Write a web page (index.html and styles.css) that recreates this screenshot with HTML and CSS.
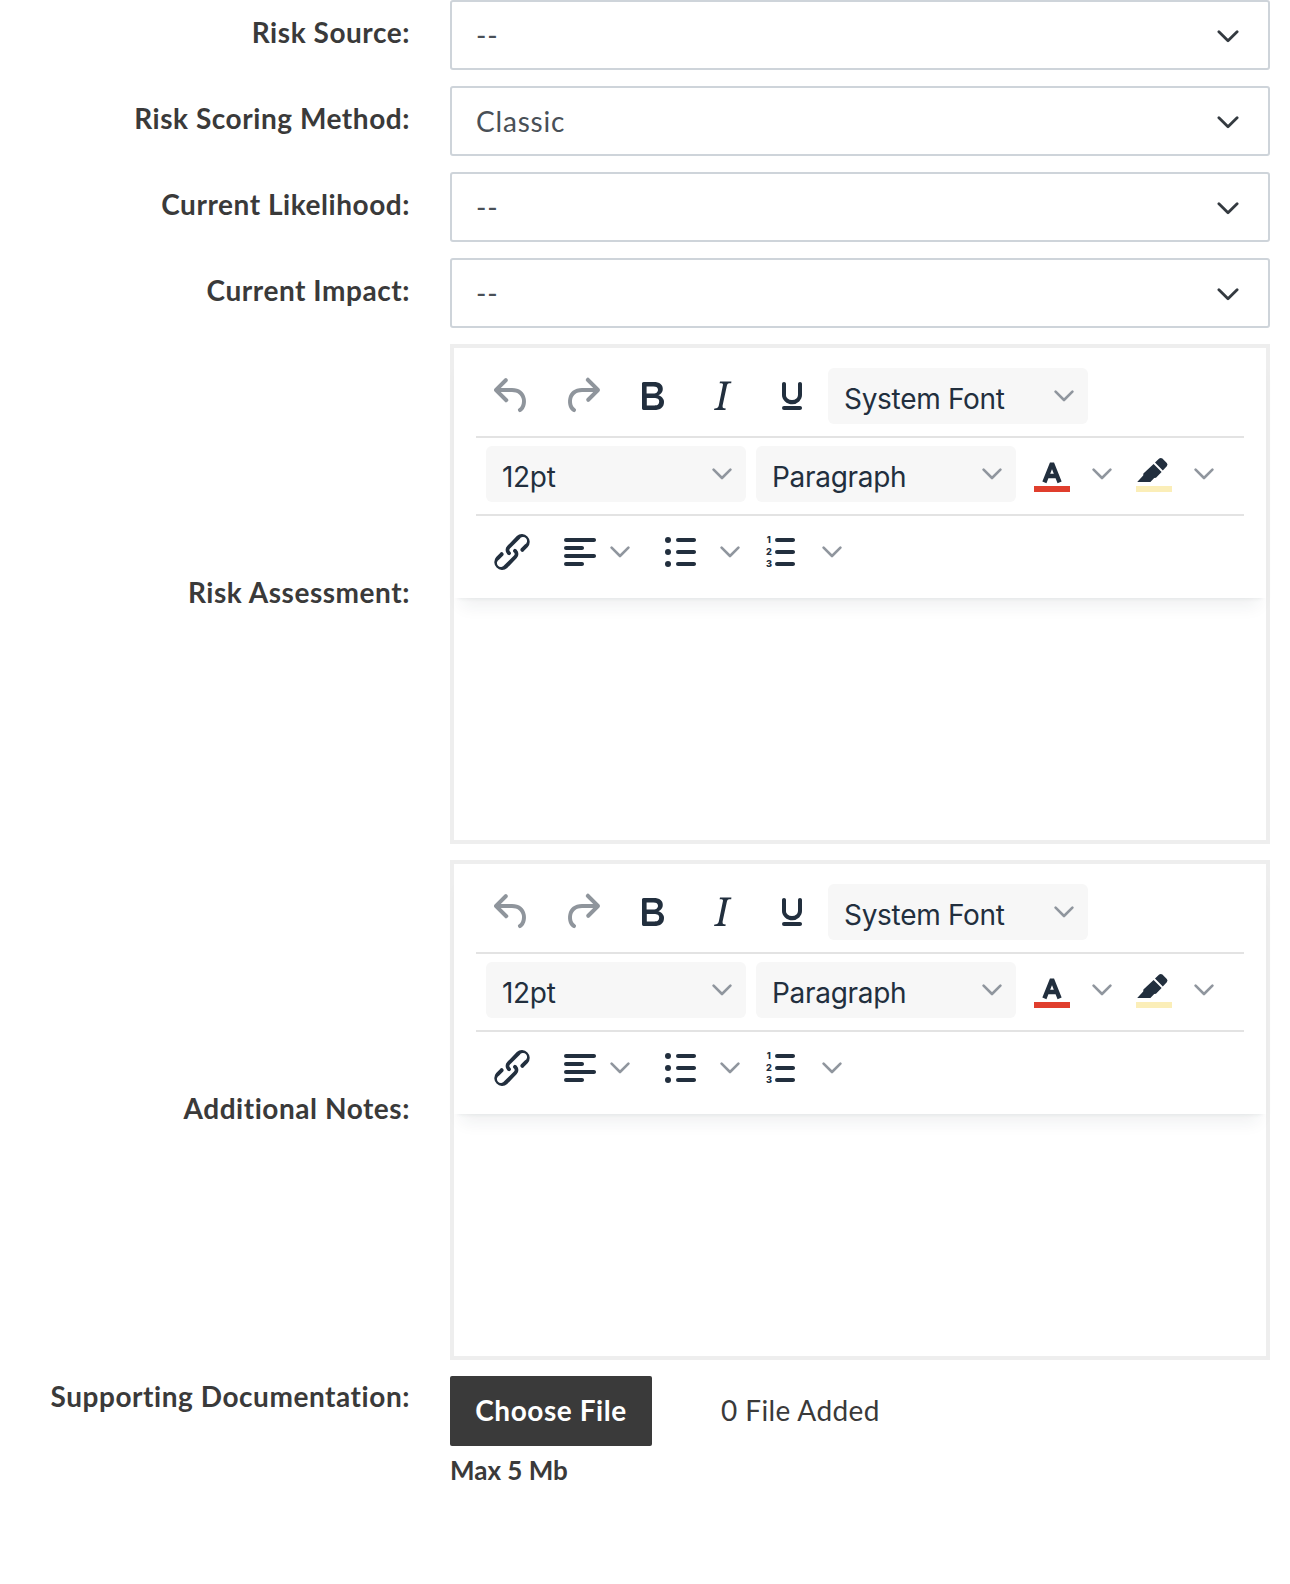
FILE: index.html
```html
<!DOCTYPE html>
<html lang="en">
<head>
<meta charset="utf-8">
<title>Risk form</title>
<link rel="stylesheet" href="styles.css">
</head>
<body>
<svg class="sprite" xmlns="http://www.w3.org/2000/svg">
  <symbol id="undo" viewBox="0 0 24 24"><path d="M6.4 8H12c3.7 0 6.2 2 6.8 5.1.6 2.7-.4 5.6-2.3 6.8a1 1 0 0 1-1-1.8c1.1-.6 1.8-2.7 1.4-4.6-.5-2.1-2.1-3.5-4.9-3.5H6.4l3.3 3.3a1 1 0 1 1-1.4 1.4l-5-5a1 1 0 0 1 0-1.4l5-5a1 1 0 0 1 1.4 1.4L6.4 8Z"/></symbol>
  <symbol id="redo" viewBox="0 0 24 24"><path d="M17.6 10H12c-2.8 0-4.4 1.4-4.9 3.5-.4 2 .3 4 1.4 4.6a1 1 0 1 1-1 1.8c-2-1.2-2.9-4.1-2.3-6.8.6-3 3-5.1 6.8-5.1h5.6l-3.3-3.3a1 1 0 1 1 1.4-1.4l5 5a1 1 0 0 1 0 1.4l-5 5a1 1 0 0 1-1.4-1.4l3.3-3.3Z"/></symbol>
  <symbol id="bold" viewBox="0 0 24 24"><path d="M7.8 19c-.3 0-.5 0-.6-.2l-.2-.5V5.7c0-.2 0-.4.2-.5l.6-.2h5c1.5 0 2.7.3 3.5 1 .7.6 1.1 1.4 1.1 2.5a3 3 0 0 1-.6 1.9c-.4.6-1 1-1.6 1.2.4.1.9.3 1.3.6s.8.7 1 1.2c.4.4.5 1 .5 1.6 0 1.3-.4 2.3-1.3 3-.8.7-2.1 1-3.8 1H7.8Zm5-8.3c.6 0 1.2-.1 1.6-.5.4-.3.6-.7.6-1.3 0-1.1-.8-1.7-2.3-1.7H9.3v3.5h3.4Zm.5 6c.7 0 1.3-.1 1.7-.4.4-.4.6-.9.6-1.5s-.2-1-.7-1.4c-.4-.3-1-.4-2-.4H9.4v3.8h4Z"/></symbol>
  <symbol id="italic" viewBox="0 0 24 24"><path d="M16.7 4.7l-.1.9h-.3c-.6 0-1 0-1.4.3-.3.3-.4.6-.5 1.1l-2.1 9.8v.6c0 .5.4.8 1.4.8h.2l-.2.8H8l.2-.8h.2c1.1 0 1.8-.5 2-1.5l2-9.8.1-.5c0-.6-.4-.8-1.4-.8h-.3l.2-.9h5.8Z"/></symbol>
  <symbol id="underline" viewBox="0 0 24 24"><path d="M16 5c.6 0 1 .4 1 1v5.5a4 4 0 0 1-.4 1.8l-1 1.4a5.3 5.3 0 0 1-5.5 1 5 5 0 0 1-1.6-1c-.5-.4-.8-.9-1.1-1.4a4 4 0 0 1-.4-1.8V6c0-.6.4-1 1-1s1 .4 1 1v5.5c0 .3 0 .6.2 1l.6.7a3.3 3.3 0 0 0 2.2.8 3.4 3.4 0 0 0 2.2-.8c.3-.2.4-.5.6-.8l.2-.9V6c0-.6.4-1 1-1ZM8 17h8c.6 0 1 .4 1 1s-.4 1-1 1H8a1 1 0 0 1 0-2Z"/></symbol>
  <symbol id="link" viewBox="0 0 24 24"><path d="M6.2 12.3a1 1 0 0 1 1.4 1.4l-2 2a2 2 0 1 0 2.6 2.8l4.8-4.8a1 1 0 0 0 0-1.4 1 1 0 1 1 1.4-1.3 2.9 2.9 0 0 1 0 4L9.6 20a3.9 3.9 0 0 1-5.5-5.5l2-2Zm11.6-.6a1 1 0 0 1-1.4-1.4l2-2a2 2 0 1 0-2.6-2.8L11 10.3a1 1 0 0 0 0 1.4A1 1 0 1 1 9.6 13a2.9 2.9 0 0 1 0-4L14.4 4a3.9 3.9 0 0 1 5.5 5.5l-2 2Z"/></symbol>
  <symbol id="alignleft" viewBox="0 0 24 24"><path d="M5 5h14c.6 0 1 .4 1 1s-.4 1-1 1H5a1 1 0 1 1 0-2Zm0 4h8c.6 0 1 .4 1 1s-.4 1-1 1H5a1 1 0 1 1 0-2Zm0 8h8c.6 0 1 .4 1 1s-.4 1-1 1H5a1 1 0 0 1 0-2Zm0-4h14c.6 0 1 .4 1 1s-.4 1-1 1H5a1 1 0 0 1 0-2Z"/></symbol>
  <symbol id="bullist" viewBox="0 0 24 24"><path d="M11 5h8c.6 0 1 .4 1 1s-.4 1-1 1h-8a1 1 0 0 1 0-2Zm0 6h8c.6 0 1 .4 1 1s-.4 1-1 1h-8a1 1 0 0 1 0-2Zm0 6h8c.6 0 1 .4 1 1s-.4 1-1 1h-8a1 1 0 0 1 0-2Z"/><circle cx="6" cy="6" r="1.5"/><circle cx="6" cy="12" r="1.5"/><circle cx="6" cy="18" r="1.5"/></symbol>
  <symbol id="numlist" viewBox="0 0 24 24"><path d="M11 5h8c.6 0 1 .4 1 1s-.4 1-1 1h-8a1 1 0 0 1 0-2Zm0 6h8c.6 0 1 .4 1 1s-.4 1-1 1h-8a1 1 0 0 1 0-2Zm0 6h8c.6 0 1 .4 1 1s-.4 1-1 1h-8a1 1 0 0 1 0-2Z"/><text class="num" x="6.8" y="7.4">1</text><text class="num" x="6.8" y="13.4">2</text><text class="num" x="6.8" y="19.4">3</text></symbol>
  <symbol id="forecolor" viewBox="0 0 24 24"><path class="glyph-stroke" d="M8.2 16.2 12 6.6 15.8 16.2M9.6 13h4.8"/><rect class="bar-red" x="3" y="18" width="18" height="3"/></symbol>
  <symbol id="hilite" viewBox="0 0 24 24"><path d="M14.6 4.3a1.2 1.2 0 0 1 1.6 0l2.2 2.2a1.2 1.2 0 0 1 0 1.6l-2 2.1-3.9-3.9 2.1-2ZM11.8 7l4 4-2.8 2.9-.9.1-1.9 2H3.6l3-3.2.1-1.1 5.1-4.7Z"/><rect class="bar-yellow" x="3" y="18" width="18" height="3"/></symbol>
  <symbol id="chev" viewBox="0 0 20 12"><path d="M1.6 1.6 10 10 18.4 1.6" fill="none" stroke="currentColor" stroke-width="2.6" stroke-linecap="round" stroke-linejoin="round"/></symbol>
</svg>

<main class="form">
  <div class="row">
    <label class="label">Risk Source:</label>
    <div class="select"><span class="select-text">--</span><svg class="select-chev"><use href="#chev"/></svg></div>
  </div>
  <div class="row">
    <label class="label">Risk Scoring Method:</label>
    <div class="select"><span class="select-text">Classic</span><svg class="select-chev"><use href="#chev"/></svg></div>
  </div>
  <div class="row">
    <label class="label">Current Likelihood:</label>
    <div class="select"><span class="select-text">--</span><svg class="select-chev"><use href="#chev"/></svg></div>
  </div>
  <div class="row">
    <label class="label">Current Impact:</label>
    <div class="select"><span class="select-text">--</span><svg class="select-chev"><use href="#chev"/></svg></div>
  </div>

  <div class="row row-editor">
    <label class="label">Risk Assessment:</label>
    <div class="editor">
      <div class="toolbar">
        <div class="tb-row tb-first">
          <span class="tb-btn muted"><svg class="icon"><use href="#undo"/></svg></span>
          <span class="tb-btn muted"><svg class="icon"><use href="#redo"/></svg></span>
          <span class="tb-btn"><svg class="icon"><use href="#bold"/></svg></span>
          <span class="tb-btn"><svg class="icon"><use href="#italic"/></svg></span>
          <span class="tb-btn"><svg class="icon"><use href="#underline"/></svg></span>
          <span class="tb-select"><span class="tb-text">System Font</span><svg class="chev"><use href="#chev"/></svg></span>
        </div>
        <div class="tb-row tb-second">
          <span class="tb-select"><span class="tb-text">12pt</span><svg class="chev"><use href="#chev"/></svg></span>
          <span class="tb-select"><span class="tb-text">Paragraph</span><svg class="chev"><use href="#chev"/></svg></span>
          <span class="tb-icon"><svg class="icon"><use href="#forecolor"/></svg></span>
          <svg class="chev split"><use href="#chev"/></svg>
          <span class="tb-icon"><svg class="icon"><use href="#hilite"/></svg></span>
          <svg class="chev split"><use href="#chev"/></svg>
        </div>
        <div class="tb-row tb-third">
          <span class="tb-icon"><svg class="icon"><use href="#link"/></svg></span>
          <span class="tb-icon"><svg class="icon"><use href="#alignleft"/></svg></span>
          <svg class="chev split-align"><use href="#chev"/></svg>
          <span class="tb-icon"><svg class="icon"><use href="#bullist"/></svg></span>
          <svg class="chev split-list"><use href="#chev"/></svg>
          <span class="tb-icon"><svg class="icon"><use href="#numlist"/></svg></span>
          <svg class="chev split-num"><use href="#chev"/></svg>
        </div>
      </div>
    </div>
  </div>

  <div class="row row-editor">
    <label class="label">Additional Notes:</label>
    <div class="editor">
      <div class="toolbar">
        <div class="tb-row tb-first">
          <span class="tb-btn muted"><svg class="icon"><use href="#undo"/></svg></span>
          <span class="tb-btn muted"><svg class="icon"><use href="#redo"/></svg></span>
          <span class="tb-btn"><svg class="icon"><use href="#bold"/></svg></span>
          <span class="tb-btn"><svg class="icon"><use href="#italic"/></svg></span>
          <span class="tb-btn"><svg class="icon"><use href="#underline"/></svg></span>
          <span class="tb-select"><span class="tb-text">System Font</span><svg class="chev"><use href="#chev"/></svg></span>
        </div>
        <div class="tb-row tb-second">
          <span class="tb-select"><span class="tb-text">12pt</span><svg class="chev"><use href="#chev"/></svg></span>
          <span class="tb-select"><span class="tb-text">Paragraph</span><svg class="chev"><use href="#chev"/></svg></span>
          <span class="tb-icon"><svg class="icon"><use href="#forecolor"/></svg></span>
          <svg class="chev split"><use href="#chev"/></svg>
          <span class="tb-icon"><svg class="icon"><use href="#hilite"/></svg></span>
          <svg class="chev split"><use href="#chev"/></svg>
        </div>
        <div class="tb-row tb-third">
          <span class="tb-icon"><svg class="icon"><use href="#link"/></svg></span>
          <span class="tb-icon"><svg class="icon"><use href="#alignleft"/></svg></span>
          <svg class="chev split-align"><use href="#chev"/></svg>
          <span class="tb-icon"><svg class="icon"><use href="#bullist"/></svg></span>
          <svg class="chev split-list"><use href="#chev"/></svg>
          <span class="tb-icon"><svg class="icon"><use href="#numlist"/></svg></span>
          <svg class="chev split-num"><use href="#chev"/></svg>
        </div>
      </div>
    </div>
  </div>

  <div class="row row-file">
    <label class="label">Supporting Documentation:</label>
    <div class="file-col">
      <div class="file-line">
        <span class="file-btn">Choose File</span>
        <span class="file-count">0 File Added</span>
      </div>
      <div class="file-note">Max 5 Mb</div>
    </div>
  </div>
</main>
</body>
</html>
```
FILE: styles.css
```css
* { box-sizing: border-box; }
html, body { margin: 0; padding: 0; background: #fff; }
body { font-family: "Lato", "Open Sans", sans-serif; font-size: 28px; line-height: 40px; letter-spacing: .55px; color: #3a3a3a; }
.sprite { display: none; }

.form { display: flex; flex-direction: column; gap: 16px; padding-right: 20px; min-height: 1584px; }
.row { display: grid; grid-template-columns: 410px 820px; column-gap: 40px; align-items: start; }
.label { font-weight: 700; text-align: right; padding-top: 12px; white-space: nowrap; }
.row-editor { align-items: center; }
.row-editor .label { padding-top: 0; margin-bottom: 4px; }
.row-file .label { padding-top: 0; }

.select { height: 70px; border: 2px solid #ced4da; border-radius: 3px; display: flex; align-items: center; justify-content: space-between; padding: 0 29px 0 24px; color: #495057; }
.select-text { padding-bottom: 1px; letter-spacing: .8px; }
.select-chev { width: 22px; height: 13px; margin-top: 2px; color: #343a40; }

.editor { height: 500px; border: 4px solid #eee; background: #fff; }
.toolbar { box-shadow: 0 4px 4px -4px rgba(34,47,62,.1), 0 16px 16px -8px rgba(34,47,62,.07); padding: 0 22px; }
.tb-row { display: flex; align-items: center; border-bottom: 2px solid #e3e3e3; font-family: "Inter", sans-serif; letter-spacing: -.3px; color: #222f3e; }
.tb-first { padding: 20px 0 12px 2px; }
.tb-second { padding: 8px 0 12px 10px; }
.tb-third { padding: 8px 0 18px 2px; border-bottom: 0; }

.tb-btn { width: 68px; height: 56px; margin-right: 2px; display: flex; align-items: center; justify-content: center; fill: #222f3e; }
.tb-btn.muted { fill: #8f959c; }
.tb-icon { width: 68px; height: 56px; padding-left: 10px; display: flex; align-items: center; fill: #222f3e; flex: none; }
.icon { width: 48px; height: 48px; flex: none; }
.num { font: 800 4.6px "Inter", sans-serif; text-anchor: middle; fill: #222f3e; }
.glyph-stroke { fill: none; stroke: #222f3e; stroke-width: 2.2; stroke-linejoin: bevel; }
.bar-red { fill: #e03e2d; }
.bar-yellow { fill: #fbeeb8; }

.tb-select { width: 260px; height: 56px; background: #f7f7f7; border-radius: 6px; display: flex; align-items: center; justify-content: space-between; padding: 0 14px 0 16px; font-size: 28px; flex: none; }
.tb-text { padding-top: 6px; }
.tb-second .tb-select { margin-right: 10px; }
.tb-second .tb-select:nth-child(2) { margin-right: 2px; }
.tb-second .tb-icon { width: 58px; }
.chev { width: 20px; height: 12px; color: #90969e; flex: none; }
.split { margin: 0 8px 0 16px; }
.split-align { margin: 0 16px 0 6px; }
.tb-third .tb-icon { width: 58px; }
.tb-third .tb-icon:first-child { width: 68px; }
.split-list { margin: 0 5px 0 16px; }
.split-num { margin: 0 0 0 19px; }

.file-col { display: flex; flex-direction: column; }
.file-line { display: flex; align-items: center; }
.file-btn { width: 202px; height: 70px; padding-bottom: 2px; background: #3a3a3a; color: #fff; font-weight: 700; border-radius: 2px; display: flex; align-items: center; justify-content: center; }
.file-count { margin-left: 69px; padding-bottom: 2px; letter-spacing: .4px; }
.file-note { font-weight: 700; font-size: 26px; letter-spacing: 0; margin-top: 4px; }
```
